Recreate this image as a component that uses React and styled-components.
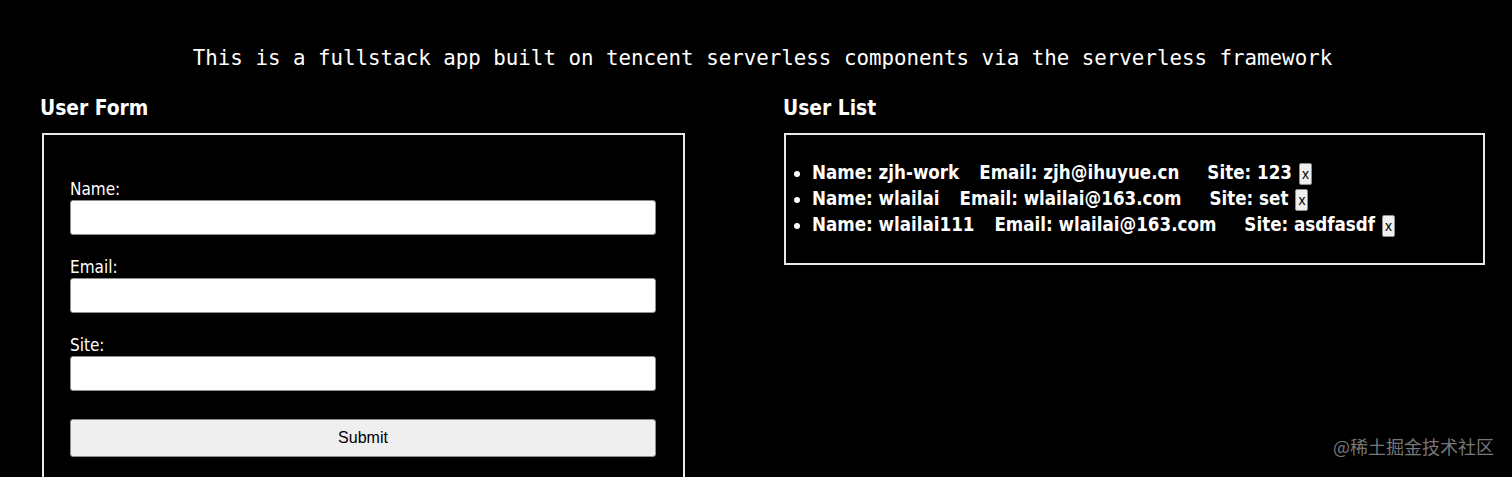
import React from 'react'
import styled, { createGlobalStyle } from 'styled-components'

const users = [
  { name: 'zjh-work', email: 'zjh@ihuyue.cn', site: '123' },
  { name: 'wlailai', email: 'wlailai@163.com', site: 'set' },
  { name: 'wlailai111', email: 'wlailai@163.com', site: 'asdfasdf' },
]

function App() {
  return (
    <Page>
      <GlobalStyle />
      <Title>This is a fullstack app built on tencent serverless components via the serverless framework</Title>
      <Columns>
        <Column>
          <Heading>User Form</Heading>
          <Box $offset={2}>
            <Form onSubmit={e => e.preventDefault()}>
              <Field>
                <Label>Name:</Label>
                <Input type="text" />
              </Field>
              <Field>
                <Label>Email:</Label>
                <Input type="text" />
              </Field>
              <Field>
                <Label>Site:</Label>
                <Input type="text" />
              </Field>
              <SubmitButton type="submit">Submit</SubmitButton>
            </Form>
          </Box>
        </Column>
        <Column>
          <Heading>User List</Heading>
          <Box $offset={1}>
            <List>
              {users.map((u, i) => (
                <Item key={i}>
                  <span>Name: {u.name}</span>
                  <Email>Email: {u.email}</Email>
                  <Site>Site: {u.site}</Site>
                  <DeleteButton>x</DeleteButton>
                </Item>
              ))}
            </List>
          </Box>
        </Column>
      </Columns>
      <Watermark>@稀土掘金技术社区</Watermark>
    </Page>
  )
}

const GlobalStyle = createGlobalStyle`
html, body {
  margin:0;
  background:#000;
}
`
const Page = styled.div`
position:relative;
height:477px;
overflow:hidden;
background:#000;
color:#fff;
font-family:"DejaVu Sans Condensed","DejaVu Sans",sans-serif;
`
const Title = styled.h2`
margin:0;
padding:46px 0 0 13px;
text-align:center;
font-family:"DejaVu Sans Mono",monospace;
font-weight:400;
font-size:20.8px;
line-height:25px;
`
const Columns = styled.div`
display:grid;
grid-template-columns:645px 702px;
column-gap:98px;
padding-left:40px;
margin-top:24px;
`
const Column = styled.div`
display:flex;
flex-direction:column;
align-items:flex-start;
`
const Heading = styled.h3`
margin:0 0 12px 0;
font-size:20.8px;
line-height:26px;
font-weight:700;
`
const Box = styled.div`
box-sizing:border-box;
width:calc(100% - ${p => p.$offset}px);
margin-left:${p => p.$offset}px;
border:2px solid #e8e8e8;
`
const Form = styled.form`
display:flex;
flex-direction:column;
gap:22px;
padding:44px 27px 40px 26px;
`
const Field = styled.div`
display:flex;
flex-direction:column;
gap:1px;
`
const Label = styled.label`
font-size:17px;
line-height:20px;
`
const Input = styled.input`
box-sizing:border-box;
height:35px;
width:100%;
background:#fff;
border:1px solid #8f8f8f;
border-radius:3px;
`
const SubmitButton = styled.button`
box-sizing:border-box;
height:38px;
margin-top:6px;
width:100%;
background:#efefef;
border:1px solid #8f8f8f;
border-radius:3px;
font-family:"Liberation Sans",Arial,sans-serif;
font-size:16px;
color:#000;
`
const List = styled.ul`
margin:0;
padding:25px 0 25px 26px;
list-style:disc;
`
const Item = styled.li`
font-size:18.6px;
line-height:26px;
font-weight:700;
white-space:nowrap;
`
const Email = styled.span`
margin-left:20px;
`
const Site = styled.span`
margin-left:28px;
`
const DeleteButton = styled.button`
display:inline-block;
vertical-align:middle;
margin-left:7px;
padding:0;
width:13px;
height:22px;
background:#efefef;
border:1px solid #8f8f8f;
border-radius:2px;
font-family:"Liberation Sans",Arial,sans-serif;
font-size:14px;
color:#000;
`
const Watermark = styled.div`
position:absolute;
right:18px;
bottom:18px;
font-family:"Noto Sans CJK SC",sans-serif;
font-size:18px;
color:#777;
`

export default App
